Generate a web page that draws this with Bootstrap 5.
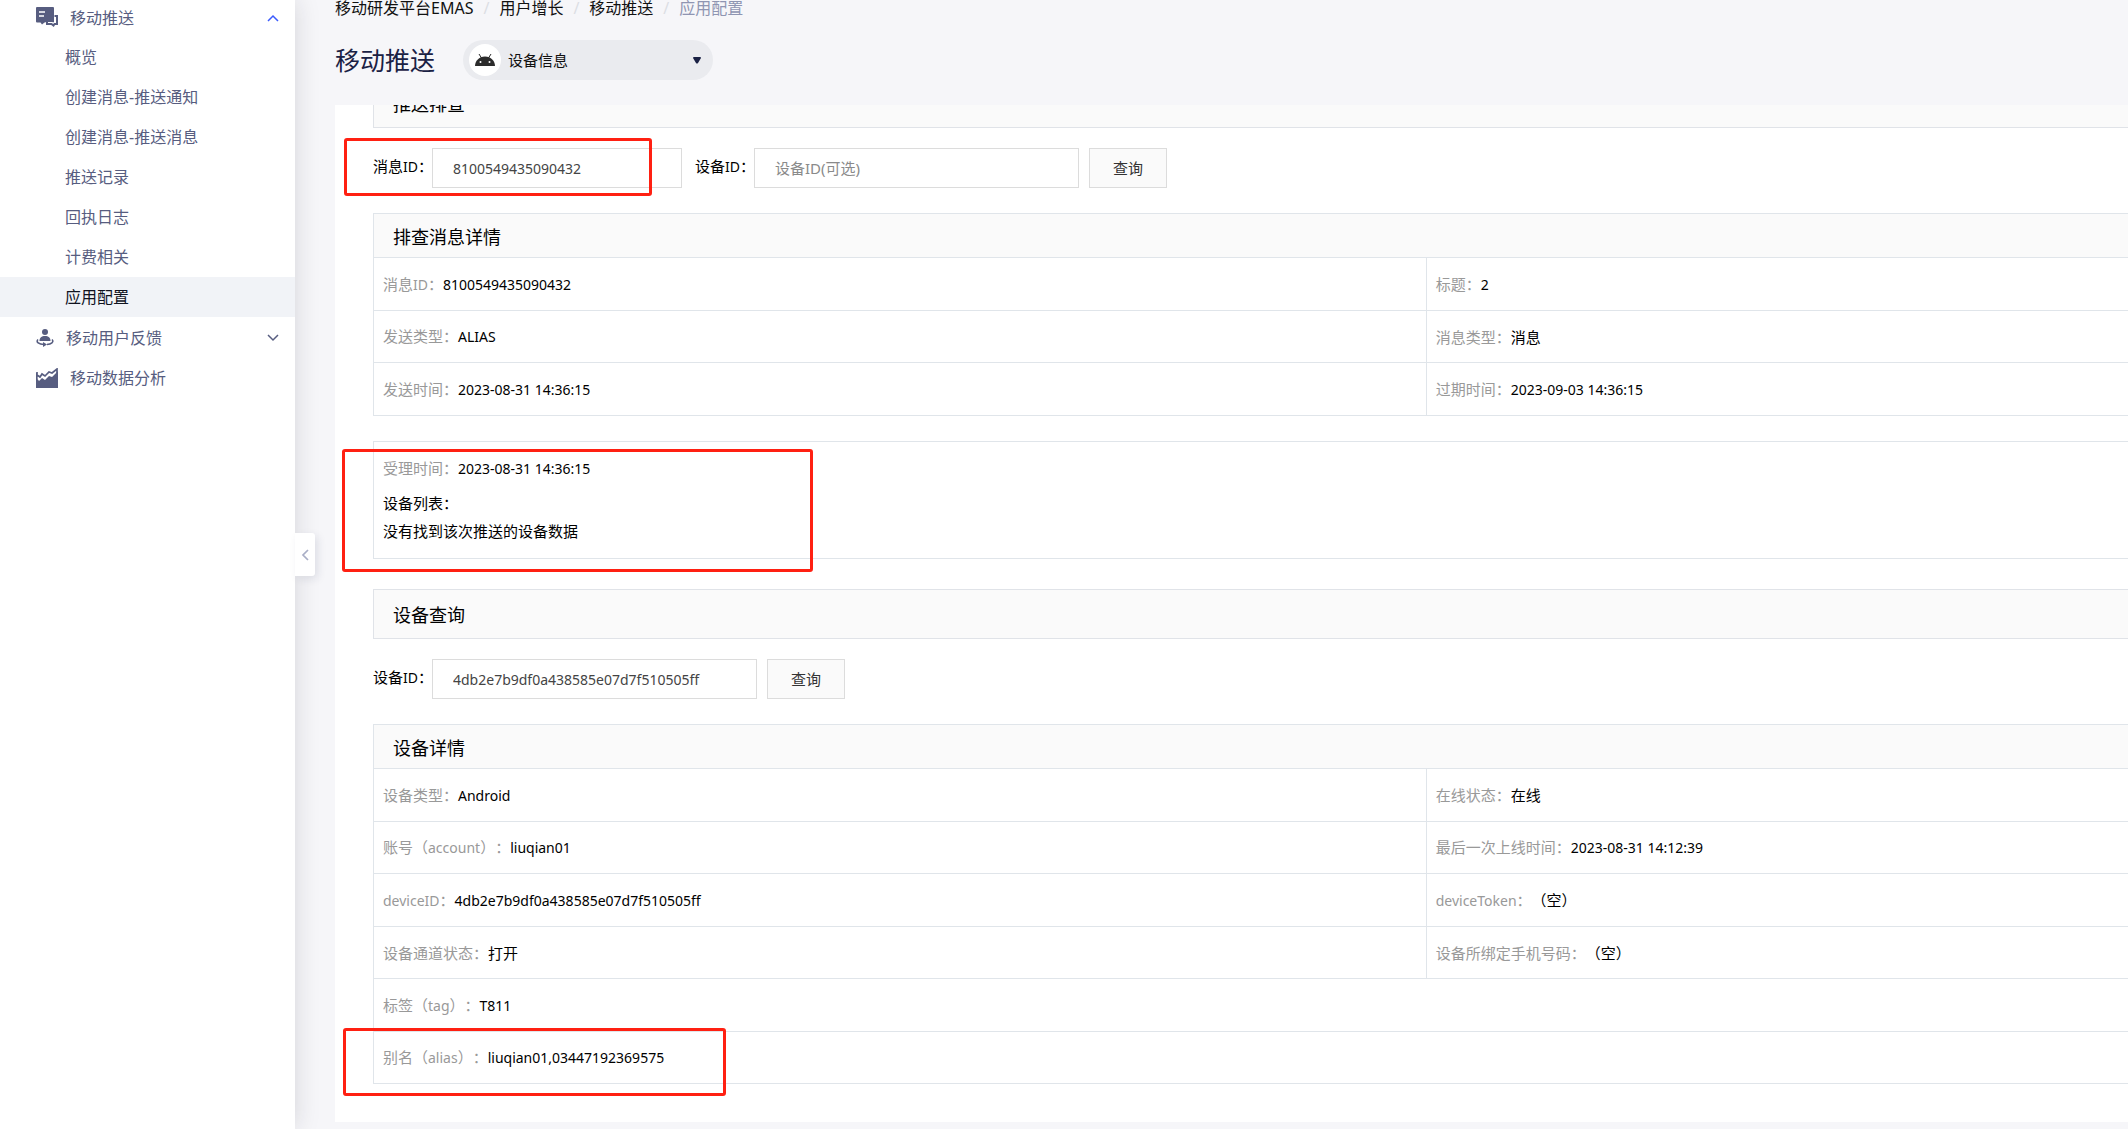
<!DOCTYPE html>
<html lang="zh-CN">
<head>
<meta charset="utf-8">
<meta name="viewport" content="width=device-width, initial-scale=1">
<title>移动推送 - 设备信息</title>
<link href="https://cdn.jsdelivr.net/npm/bootstrap@5.3.0/dist/css/bootstrap.min.css" rel="stylesheet">
<style>
body{font-family:"Noto Sans","Noto Sans CJK SC",sans-serif;font-size:15px;line-height:20px;color:#000;background:#f6f6f9;text-spacing-trim:space-all}
.shell{min-height:100vh}
.side{width:295px;flex:none;background:#fff;box-shadow:0 0 24px rgba(30,30,40,.15);position:relative;z-index:2;font-size:16px}
.side a{height:40px;color:#575d80;text-decoration:none;display:flex;align-items:center}
.side .top-item{padding:2px 16px 0 36px}
.side .first{height:37px;padding-top:0;padding-bottom:2px}
.side .sub{padding-left:65px}
.side .active{background:#f1f3f7;color:#10131f}
.side .chev{margin-left:auto}
.fold{position:absolute;left:100%;top:533px;width:20px;height:43px;border:0;padding:0;background:#fff;border-radius:0 3px 3px 0;box-shadow:3px 3px 8px rgba(30,36,80,.1);display:flex;align-items:center;justify-content:center}
main{padding-left:40px;min-width:0}
.crumbs{height:40px;font-size:16px;line-height:16px;--bs-breadcrumb-divider-color:#dcdee4;--bs-breadcrumb-item-padding-x:10px}
.crumbs a{color:#111;text-decoration:none}
.crumbs .active{color:#8f95b2}
.page-title{font-size:25px;line-height:40px;font-weight:400;color:#1a2144;width:128px;margin:0}
.app-pick{width:250px;height:40px;border:0;border-radius:20px;background:#eaebef;padding:0 12px 0 6px;color:#111}
.app-face{width:32px;height:32px;border-radius:50%;background:#fff;margin-right:7px}
.panel{margin-top:25px;margin-bottom:7px;background:#fff;padding:0 0 38px 38px;overflow:hidden}
.bar{height:50px;border:1px solid #e0e3e8;border-right:0;background:#fafafa;padding-left:19px;font-size:18px;line-height:50px;font-weight:400;margin:0}
.cut{margin-top:-27px}
.ask{padding:20px 0 25px;position:relative}
.ask label{width:59px;padding-bottom:4px;white-space:nowrap}
.ask input{height:40px;border:1px solid #dcdcdc;border-radius:0;padding:0 20px;font-size:14px;color:#444}
.ask input::placeholder{color:#8a8a8a;font-size:15px}
.w-id{width:250px;margin-right:13px}
.w-dev{width:325px;margin-right:10px}
.ask button{width:78px;height:40px;border:1px solid #dcdcdc;border-radius:0;background:#fafafa;color:#333;font-size:15px;padding:0}
.kv{width:100%;table-layout:fixed;border-collapse:collapse;margin:0}
.kv th,.kv td{border:1px solid #e0e5ea;border-right:0;height:53px;padding:0 9px;vertical-align:middle;white-space:nowrap}
.kv tr:nth-child(even) td{height:52px}
.kv thead th{height:44px;background:#fafafa;font-size:18px;font-weight:400;padding:2px 0 0 19px}
.kv .c1{width:60%}
.k{color:#999}
.en{font-size:14px}
.result{border:1px solid #e0e5ea;border-right:0;height:118px;padding:16px 9px;margin:25px 0 30px;position:relative}
.accepted{margin-bottom:14px}
.frame{position:absolute;border:3px solid #ff2012;border-radius:3px;pointer-events:none}
.f1{left:-29px;top:10px;width:308px;height:58px}
.f2{left:-32px;top:7px;width:471px;height:123px}
.f3{left:-30px;bottom:-12px;width:383px;height:68px}
</style>
<script src="https://cdn.jsdelivr.net/npm/bootstrap@5.3.0/dist/js/bootstrap.bundle.min.js"></script>
</head>
<body>
<div class="shell d-flex">
  <nav class="side">
    <a class="top-item first" href="#">
      <svg width="22" height="21" viewBox="0 0 22 21" class="me-2"><path fill="#575d80" d="M1 0h16a1 1 0 0 1 1 1v14.500H8.500L6 17.500l-1.500-2H1a1 1 0 0 1-1-1V1a1 1 0 0 1 1-1z"/><path stroke="#fff" stroke-width="1.500" d="M3 5h6M3 9h5"/><path fill="none" stroke="#fff" stroke-width="4" d="M19 9h2v8h-2l-1.500 1.500-2-1.500h-4v-2"/><path fill="none" stroke="#575d80" stroke-width="2" d="M18.500 9H21v8h-2.500l-1 1.500-2-1.500H11v-2"/></svg>
      <span class="ms-1">移动推送</span>
      <svg class="chev" width="12" height="8" viewBox="0 0 12 8"><path fill="none" stroke="#3b5bfd" stroke-width="1.500" d="M1 7l5-5 5 5"/></svg>
    </a>
    <a class="sub" href="#">概览</a>
    <a class="sub" href="#">创建消息-推送通知</a>
    <a class="sub" href="#">创建消息-推送消息</a>
    <a class="sub" href="#">推送记录</a>
    <a class="sub" href="#">回执日志</a>
    <a class="sub" href="#">计费相关</a>
    <a class="sub active" href="#" aria-current="page">应用配置</a>
    <a class="top-item" href="#">
      <svg width="18" height="18" viewBox="0 0 18 18" class="me-2"><circle cx="9" cy="3" r="3" fill="#575d80"/><path fill="#575d80" d="M3.500 12c0-3.500 2-5 5.500-5s5.500 1.500 5.500 5z"/><path fill="none" stroke="#575d80" stroke-width="1.600" d="M2 10.500C-.5 13 3 15.500 8 15.500M16 10.500c2.500 2.500-1 4.800-5 5"/><path fill="#575d80" d="M7 13l4 2.500L7 18z"/></svg>
      <span class="ms-1">移动用户反馈</span>
      <svg class="chev" width="12" height="8" viewBox="0 0 12 8"><path fill="none" stroke="#575d80" stroke-width="1.500" d="M1 1l5 5 5-5"/></svg>
    </a>
    <a class="top-item" href="#">
      <svg width="22" height="20" viewBox="0 0 22 20" class="me-2"><path fill="#575d80" d="M0 20V9l3 4 3-3 3 2 4-4 3 1 6-6v17z"/><path fill="none" stroke="#575d80" stroke-width="1.700" d="M1 4v3l3 2 2-3 3 2 4-4 3 1 5-4v4M.8 5v6"/></svg>
      <span class="ms-1">移动数据分析</span>
    </a>
    <button class="fold" type="button" aria-label="收起菜单"><svg width="8" height="12" viewBox="0 0 8 12"><path fill="none" stroke="#a9aec6" stroke-width="1.700" d="M7 1L2 6l5 5"/></svg></button>
  </nav>

  <main class="flex-grow-1">
    <ol class="breadcrumb crumbs mb-0">
      <li class="breadcrumb-item"><a href="#">移动研发平台EMAS</a></li>
      <li class="breadcrumb-item"><a href="#">用户增长</a></li>
      <li class="breadcrumb-item"><a href="#">移动推送</a></li>
      <li class="breadcrumb-item active" aria-current="page">应用配置</li>
    </ol>
    <div class="d-flex align-items-center">
      <h1 class="page-title">移动推送</h1>
      <button class="app-pick d-flex align-items-center" type="button">
        <span class="app-face d-flex align-items-center justify-content-center"><svg width="20" height="12" viewBox="0 0 20 12"><path fill="#2b2b2b" d="M0 12C0 7 4 2.500 10 2.500S20 7 20 12z"/><path stroke="#2b2b2b" stroke-width="1" d="M4 0l2.500 4M16 0l-2.500 4"/><circle cx="5.500" cy="8" r="1" fill="#fff"/><circle cx="14.500" cy="8" r="1" fill="#fff"/></svg></span>
        <span>设备信息</span>
        <svg class="ms-auto" width="8" height="7" viewBox="0 0 8 7"><path fill="#1a2144" d="M0 1q0-1 1-1h6q1 0 1 1L5 6q-1 1-2 0z"/></svg>
      </button>
    </div>

    <section class="panel">
      <h2 class="bar cut">推送排查</h2>
      <form class="ask d-flex align-items-center">
        <label for="msg">消息<span class="en">ID</span>：</label>
        <input id="msg" class="w-id" type="text" value="8100549435090432">
        <label for="dev1">设备<span class="en">ID</span>：</label>
        <input id="dev1" class="w-dev" type="text" placeholder="设备ID(可选)">
        <button type="button">查询</button>
        <span class="frame f1"></span>
      </form>

      <table class="kv">
        <colgroup><col class="c1"><col></colgroup>
        <thead><tr><th colspan="2">排查消息详情</th></tr></thead>
        <tbody>
          <tr><td><span class="k">消息<span class="en">ID</span>：</span><span class="en">8100549435090432</span></td><td><span class="k">标题：</span><span class="en">2</span></td></tr>
          <tr><td><span class="k">发送类型：</span><span class="en">ALIAS</span></td><td><span class="k">消息类型：</span>消息</td></tr>
          <tr><td><span class="k">发送时间：</span><span class="en">2023-08-31 14:36:15</span></td><td><span class="k">过期时间：</span><span class="en">2023-09-03 14:36:15</span></td></tr>
        </tbody>
      </table>

      <div class="result">
        <div class="accepted"><span class="k">受理时间：</span><span class="en">2023-08-31 14:36:15</span></div>
        <div class="mb-2">设备列表：</div>
        <div>没有找到该次推送的设备数据</div>
        <span class="frame f2"></span>
      </div>

      <h2 class="bar">设备查询</h2>
      <form class="ask d-flex align-items-center">
        <label for="dev2">设备<span class="en">ID</span>：</label>
        <input id="dev2" class="w-dev" type="text" value="4db2e7b9df0a438585e07d7f510505ff">
        <button type="button">查询</button>
      </form>

      <div class="position-relative">
        <table class="kv">
          <colgroup><col class="c1"><col></colgroup>
          <thead><tr><th colspan="2">设备详情</th></tr></thead>
          <tbody>
            <tr><td><span class="k">设备类型：</span><span class="en">Android</span></td><td><span class="k">在线状态：</span>在线</td></tr>
            <tr><td><span class="k">账号（<span class="en">account</span>）：</span><span class="en">liuqian01</span></td><td><span class="k">最后一次上线时间：</span><span class="en">2023-08-31 14:12:39</span></td></tr>
            <tr><td><span class="k"><span class="en">deviceID</span>：</span><span class="en">4db2e7b9df0a438585e07d7f510505ff</span></td><td><span class="k"><span class="en">deviceToken</span>：</span>（空）</td></tr>
            <tr><td><span class="k">设备通道状态：</span>打开</td><td><span class="k">设备所绑定手机号码：</span>（空）</td></tr>
            <tr><td colspan="2"><span class="k">标签（<span class="en">tag</span>）：</span><span class="en">T811</span></td></tr>
            <tr><td colspan="2"><span class="k">别名（<span class="en">alias</span>）：</span><span class="en">liuqian01,03447192369575</span></td></tr>
          </tbody>
        </table>
        <span class="frame f3"></span>
      </div>
    </section>
  </main>
</div>
</body>
</html>
